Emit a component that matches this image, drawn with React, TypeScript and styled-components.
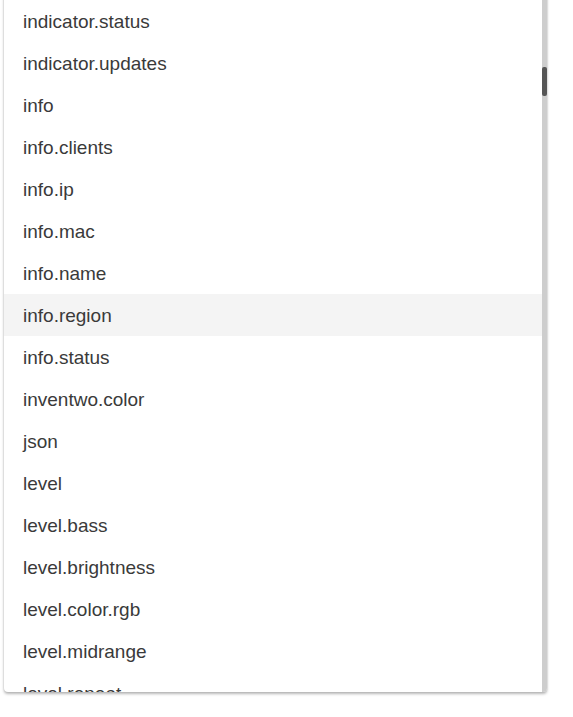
import * as React from 'react'
import styled, { createGlobalStyle } from 'styled-components'

const GlobalStyle = createGlobalStyle`
  html, body {
    margin: 0;
    padding: 0;
    background: #ffffff;
    overflow: hidden;
  }
  body {
    font-family: "Liberation Sans", Arial, sans-serif;
  }
`

const Page = styled.div`
  width: 573px;
  height: 717px;
  overflow: hidden;
`

const Panel = styled.div`
  margin: -10px 0 0 4px;
  width: 543px;
  height: 702px;
  display: flex;
  background: #ffffff;
  border-radius: 0 0 4px 4px;
  box-shadow: 0 2px 3px rgba(0, 0, 0, 0.28), 0 0 2px rgba(0, 0, 0, 0.12);
  overflow: hidden;
`

const List = styled.ul`
  flex: 1;
  list-style: none;
  margin: 0;
  padding: 10px 0 0;
  overflow: hidden;
`

const Option = styled.li<{ $active?: boolean }>`
  box-sizing: border-box;
  height: 42px;
  display: flex;
  align-items: center;
  padding: 2px 0 0 19px;
  font-size: 19px;
  color: #3a3a3a;
  background: ${p => (p.$active ? '#f4f4f4' : 'transparent')};
  white-space: nowrap;
`

const Track = styled.div`
  width: 5px;
  flex: none;
  background: #cdcdcd;
  padding-top: 77px;
`

const Thumb = styled.div`
  height: 29px;
  background: #555555;
  border-radius: 2px;
`

const options = [
  'indicator.status',
  'indicator.updates',
  'info',
  'info.clients',
  'info.ip',
  'info.mac',
  'info.name',
  'info.region',
  'info.status',
  'inventwo.color',
  'json',
  'level',
  'level.bass',
  'level.brightness',
  'level.color.rgb',
  'level.midrange',
  'level.repeat',
]

export default function App() {
  return (
    <Page>
      <GlobalStyle />
      <Panel>
        <List>
          {options.map(o => (
            <Option key={o} $active={o === 'info.region'}>
              {o}
            </Option>
          ))}
        </List>
        <Track>
          <Thumb />
        </Track>
      </Panel>
    </Page>
  )
}
